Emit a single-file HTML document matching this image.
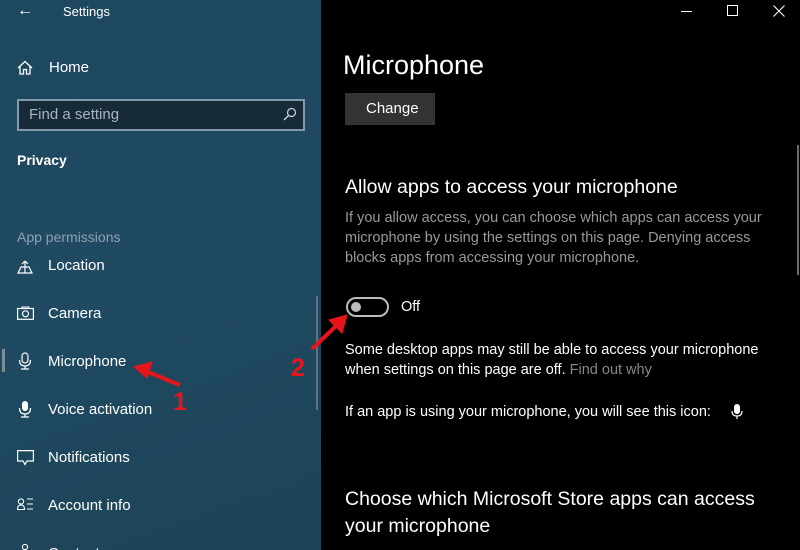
<!DOCTYPE html>
<html style="overflow:hidden"><head><meta charset="utf-8"><style>
*{margin:0;padding:0;box-sizing:border-box}
html,body{width:800px;height:550px;overflow:hidden}
body{font-family:"Liberation Sans",sans-serif;background:#000;position:relative}
#side{position:absolute;left:0;top:0;width:321px;height:550px;overflow:hidden;background:linear-gradient(160deg,#1e4860 0%,#1f4a62 50%,#1d4356 100%);color:#fff}
.t{position:absolute;white-space:nowrap}
.nav{font-size:15px;color:#fff;left:48px}
.ic{position:absolute;left:17px}
#main{position:absolute;left:321px;top:0;width:479px;height:550px;overflow:hidden;background:#000;color:#fff}
</style></head><body>
<div id="side">
 <div class="t" style="left:17px;top:2px;font-size:16px">&#8592;</div>
 <div class="t" style="left:63px;top:4px;font-size:13px">Settings</div>
 <svg class="ic" style="top:60px" width="16" height="15" viewBox="0 0 16 15"><path d="M1 8 L8 1.5 L15 8 M3 6.5 V14 H6.5 V9.5 H9.5 V14 H13 V6.5" fill="none" stroke="#fff" stroke-width="1.3"/></svg>
 <div class="t nav" style="left:49px;top:59px">Home</div>
 <div style="position:absolute;left:17px;top:99px;width:288px;height:32px;border:2px solid #8399a6;background:#162a38"></div>
 <div class="t" style="left:29px;top:106px;font-size:15px;color:#a8b4bb">Find a setting</div>
 <svg style="position:absolute;left:283px;top:107px" width="14" height="14" viewBox="0 0 14 14"><circle cx="8.5" cy="5.5" r="4" fill="none" stroke="#cfd6db" stroke-width="1.2"/><path d="M5.5 8.5 L1 13" stroke="#cfd6db" stroke-width="1.3"/></svg>
 <div class="t" style="left:17px;top:152px;font-size:14px;font-weight:bold">Privacy</div>
 <div class="t" style="left:17px;top:229px;font-size:14px;color:#8ea3af">App permissions</div>
 <svg class="ic" style="top:258px" width="16" height="16" viewBox="0 0 16 16"><path d="M1 15 H15 L12 9 H4 Z M8 15 V3 M8 3 L5 6 M8 3 L11 6" fill="none" stroke="#fff" stroke-width="1.2"/></svg>
 <div class="t nav" style="top:257px">Location</div>
 <svg class="ic" style="top:306px" width="17" height="14" viewBox="0 0 17 14"><rect x="0.6" y="2.5" width="15.8" height="10.8" fill="none" stroke="#fff" stroke-width="1.2"/><circle cx="8.5" cy="7.8" r="3" fill="none" stroke="#fff" stroke-width="1.2"/><path d="M5 2.5 V1 H12 V2.5" fill="none" stroke="#fff"/></svg>
 <div class="t nav" style="top:305px">Camera</div>
 <div style="position:absolute;left:2px;top:349px;width:3px;height:23px;background:#7d8b93"></div>
 <svg class="ic" style="top:352px;left:18px" width="14" height="18" viewBox="0 0 14 18"><rect x="4" y="1" width="6" height="10" rx="3" fill="none" stroke="#fff" stroke-width="1.2"/><path d="M1.5 8 Q1.5 14 7 14 Q12.5 14 12.5 8 M7 14 V17 M3 17 H11" fill="none" stroke="#fff" stroke-width="1.2"/></svg>
 <div class="t nav" style="top:353px">Microphone</div>
 <svg class="ic" style="top:400px;left:18px" width="14" height="18" viewBox="0 0 14 18"><rect x="4" y="1" width="6" height="10" rx="3" fill="#fff"/><path d="M1.5 8 Q1.5 14 7 14 Q12.5 14 12.5 8 M7 14 V17 M3 17 H11" fill="none" stroke="#fff" stroke-width="1.2"/></svg>
 <div class="t nav" style="top:401px">Voice activation</div>
 <svg class="ic" style="top:450px" width="17" height="16" viewBox="0 0 17 16"><path d="M0.6 0.6 H16.4 V11 H10 L8 14.5 L6 11 H0.6 Z" fill="none" stroke="#fff" stroke-width="1.2"/></svg>
 <div class="t nav" style="top:449px">Notifications</div>
 <svg class="ic" style="top:498px" width="17" height="12" viewBox="0 0 17 12"><circle cx="4" cy="3.5" r="2.6" fill="none" stroke="#fff" stroke-width="1.1"/><path d="M0.5 11.5 Q0.5 7 4 7 Q7.5 7 7.5 11.5 Z M10 1 H16 M10 6 H16 M10 11 H16" fill="none" stroke="#fff" stroke-width="1.1"/></svg>
 <div class="t nav" style="top:497px">Account info</div>
 <svg class="ic" style="top:543px" width="17" height="10" viewBox="0 0 17 10"><circle cx="8" cy="4" r="2.6" fill="none" stroke="#fff" stroke-width="1.1"/></svg>
 <div class="t nav" style="top:545px">Contacts</div>
 <div style="position:absolute;left:316px;top:296px;width:2px;height:114px;background:#5d7482"></div>
</div>
<div id="main">
 <div style="position:absolute;left:360px;top:11px;width:11px;height:1px;background:#fff"></div>
 <div style="position:absolute;left:406px;top:5px;width:11px;height:11px;border:1px solid #fff"></div>
 <svg style="position:absolute;left:452px;top:5px" width="12" height="12"><path d="M0.5 0.5 L11.5 11.5 M11.5 0.5 L0.5 11.5" stroke="#fff" stroke-width="1.1"/></svg>
 <div class="t" style="left:22px;top:50px;font-size:27px">Microphone</div>
 <div style="position:absolute;left:24px;top:93px;width:90px;height:32px;background:#333"></div>
 <div class="t" style="left:45px;top:100px;font-size:15px">Change</div>
 <div class="t" style="left:24px;top:176px;font-size:19.5px">Allow apps to access your microphone</div>
 <div class="t" style="left:24px;top:208px;font-size:14.5px;color:#999;line-height:20px">If you allow access, you can choose which apps can access your<br>microphone by using the settings on this page. Denying access<br>blocks apps from accessing your microphone.</div>
 <div style="position:absolute;left:25px;top:297px;width:43px;height:20px;border:2px solid #bbb;border-radius:10px"></div>
 <div style="position:absolute;left:30px;top:302px;width:10px;height:10px;border-radius:50%;background:#bbb"></div>
 <div class="t" style="left:80px;top:299px;font-size:14.5px">Off</div>
 <div class="t" style="left:24px;top:340px;font-size:14.5px;line-height:20px">Some desktop apps may still be able to access your microphone<br>when settings on this page are off. <span style="color:#888">Find out why</span></div>
 <div class="t" style="left:24px;top:404px;font-size:14.5px">If an app is using your microphone, you will see this icon:</div>
 <svg style="position:absolute;left:410px;top:404px" width="12" height="16" viewBox="0 0 12 16"><rect x="3" y="0" width="6" height="10" rx="3" fill="#fff"/><path d="M1 7 Q1 12 6 12 Q11 12 11 7 M6 12 V15" fill="none" stroke="#fff" stroke-width="1.2"/></svg>
 <div class="t" style="left:24px;top:486px;font-size:19.5px;line-height:27px">Choose which Microsoft Store apps can access<br>your microphone</div>
 <div style="position:absolute;left:476px;top:145px;width:2px;height:130px;background:#6a6a6a"></div>
</div>
<svg style="position:absolute;left:0;top:0" width="800" height="550">
 <g fill="#e8141c" stroke="#e8141c">
  <path d="M180 385 L148 372" stroke-width="4"/>
  <path d="M134 367 L152 362 L147 378 Z"/>
  <path d="M312 349 L337 325" stroke-width="4"/>
  <path d="M347 315 L342 333 L329 320 Z"/>
 </g>
 <text x="173" y="410" font-family="Liberation Sans" font-weight="bold" font-size="25" fill="#e8141c">1</text>
 <text x="291" y="376" font-family="Liberation Sans" font-weight="bold" font-size="25" fill="#e8141c">2</text>
</svg>
</body></html>
